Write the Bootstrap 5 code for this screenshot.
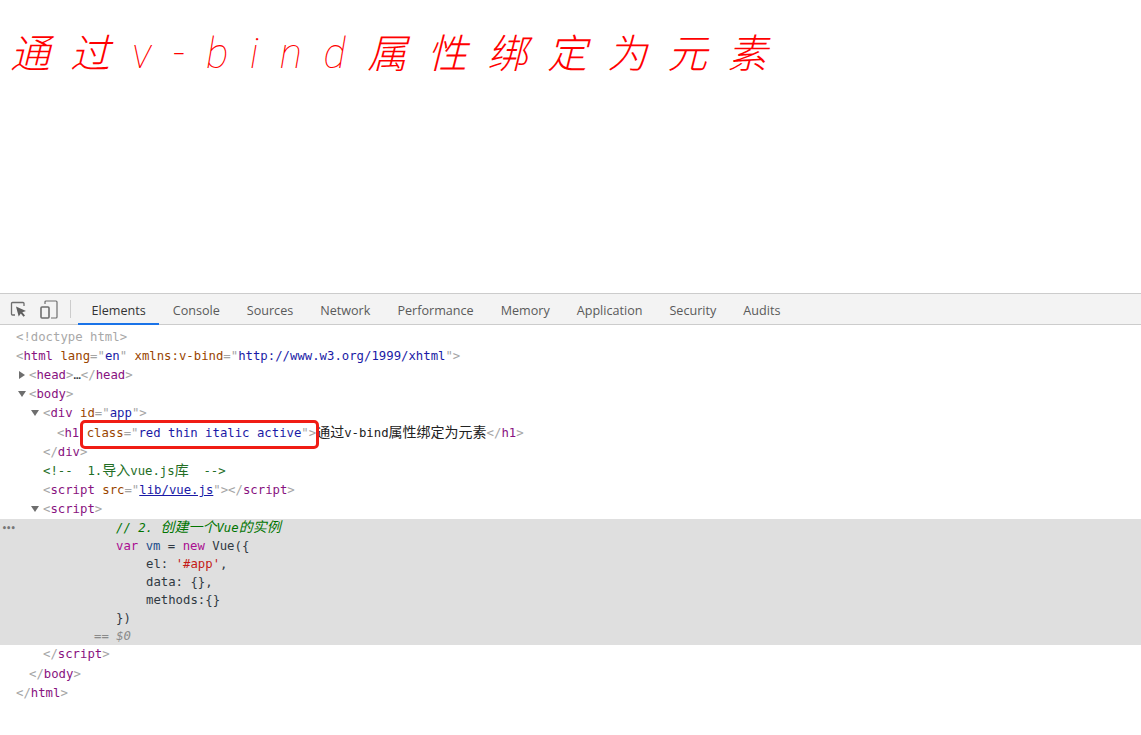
<!doctype html>
<html lang="zh"><head><meta charset="utf-8">
<link href="https://cdn.jsdelivr.net/npm/bootstrap@5.3.0/dist/css/bootstrap.min.css" rel="stylesheet">
<style>
body{background:#fff;overflow:hidden}
.stage{height:293px;padding:25px 0 0 10px}
.stage h1{margin:0;color:#f00;font-family:"Roboto","Noto Sans CJK SC",sans-serif;font-weight:200;font-style:italic;font-size:40px;letter-spacing:20px;line-height:58px;white-space:nowrap}
.stage h1 .lat{letter-spacing:21.4px;font-weight:100;font-size:42px;padding-left:2px}
.dt-bar{height:32px;background:#f3f3f3;border-top:1px solid #ccc;border-bottom:1px solid #ccc;font-family:"Open Sans","Noto Sans",sans-serif;font-size:12.6px;color:#5a5a5a}
.dt-icons{width:70px;padding-left:10px;gap:13px}
.dt-sep{width:1px;height:18px;background:#ccc;margin-right:7px}
.dt-tab{padding:2px 13.5px 0;height:31px;line-height:29px;white-space:nowrap}
.dt-tab.on{color:#333;box-shadow:inset 0 -2px 0 #1a73e8}
.tree{font-family:"DejaVu Sans Mono","Noto Sans CJK SC",monospace;font-size:12.3px;color:#303942;padding-top:3px;position:relative}
.ln{height:19px;line-height:19px;position:relative;white-space:pre}
.gap{margin-top:1px}
.i0{padding-left:16px}.i1{padding-left:29px}.i2{padding-left:43px}.i3{padding-left:57px}
.sel{background:#dfdfdf}
.sel .ln{height:18px;line-height:19px}
.sel .ln:first-child{line-height:17px}
.tail .ln{height:19.5px}
.code{padding-left:116px}.code2{padding-left:146px}
.tg{color:#881280}.br{color:#a5a5a5}.an{color:#994500}.av{color:#1a1aa6}.cm{color:#236e25}.dim{color:#a8a8a8}
.lk{color:#1a1aa6;text-decoration:underline}
.kw{color:#aa0d91}.str{color:#c41a16}.var{color:#1c4d8b}
.ccm{color:#007400;font-style:italic}
.zh{font-size:14px;line-height:1;font-family:"Noto Sans CJK SC",sans-serif}
.tw{position:absolute;width:0;height:0}
.tw.r{border-left:6px solid #6e6e6e;border-top:4px solid transparent;border-bottom:4px solid transparent;top:5px}
.tw.d{border-top:6px solid #6e6e6e;border-left:4px solid transparent;border-right:4px solid transparent;top:6px}
.dots{position:absolute;left:2px;top:1px;color:#777;font-weight:700;font-size:8px;letter-spacing:-.5px}
.hl{position:absolute;left:80px;top:95px;width:239px;height:29px;border:3px solid #f01c14;border-radius:5px}
.txt{color:#222}
.eq{color:#8a8a8a}
</style></head><body>
<div class="stage"><h1>通过<span class="lat">v-bind</span>属性绑定为元素</h1></div>
<div class="dt-bar d-flex align-items-center">
 <div class="dt-icons d-flex align-items-center flex-shrink-0">
  <svg width="17" height="17" viewBox="0 0 17 17" fill="none"><path d="M5 14H2.500A1 1 0 0 1 1.500 13V2.500A1 1 0 0 1 2.500 1.500H13A1 1 0 0 1 14 2.500V5" stroke="#6e6e6e" stroke-width="1.300"/><path d="M6 5.500 16 10 12.300 11.300 15 14.500 13.500 15.800 10.800 12.400 8.700 15.500Z" fill="#5f5f5f"/></svg>
  <svg width="18" height="19" viewBox="0 0 18 19" fill="none"><rect x="1" y="7" width="8" height="11" rx="1" stroke="#6e6e6e" stroke-width="1.600"/><path d="M5 4V2A1 1 0 0 1 6 1H16A1 1 0 0 1 17 2V17A1 1 0 0 1 16 18H11" stroke="#6e6e6e" stroke-width="1.200"/></svg>
 </div>
 <div class="dt-sep flex-shrink-0"></div>
 <div class="dt-tab on">Elements</div><div class="dt-tab">Console</div><div class="dt-tab">Sources</div><div class="dt-tab">Network</div><div class="dt-tab">Performance</div><div class="dt-tab">Memory</div><div class="dt-tab">Application</div><div class="dt-tab">Security</div><div class="dt-tab">Audits</div>
</div>
<div class="tree">
<div class="ln i0 dim">&lt;!doctype html&gt;</div>
<div class="ln i0"><span class="br">&lt;</span><span class="tg">html</span> <span class="an">lang</span><span class="br">="</span><span class="av">en</span><span class="br">"</span> <span class="an">xmlns:v-bind</span><span class="br">="</span><span class="av">http://www.w3.org/1999/xhtml</span><span class="br">"&gt;</span></div>
<div class="ln i1"><i class="tw r" style="left:19px"></i><span class="br">&lt;</span><span class="tg">head</span><span class="br">&gt;</span>…<span class="br">&lt;/</span><span class="tg">head</span><span class="br">&gt;</span></div>
<div class="ln i1"><i class="tw d" style="left:18px"></i><span class="br">&lt;</span><span class="tg">body</span><span class="br">&gt;</span></div>
<div class="ln i2"><i class="tw d" style="left:31px"></i><span class="br">&lt;</span><span class="tg">div</span> <span class="an">id</span><span class="br">="</span><span class="av">app</span><span class="br">"&gt;</span></div>
<div class="ln i3 gap"><span class="br">&lt;</span><span class="tg">h1</span> <span class="an">class</span><span class="br">="</span><span class="av">red thin italic active</span><span class="br">"&gt;</span><span class="txt"><span class="zh">通过</span>v-bind<span class="zh">属性绑定为元素</span></span><span class="br">&lt;/</span><span class="tg">h1</span><span class="br">&gt;</span></div>
<div class="ln i2"><span class="br">&lt;/</span><span class="tg">div</span><span class="br">&gt;</span></div>
<div class="ln i2 cm">&lt;!--  1.<span class="zh">导入</span>vue.js<span class="zh">库</span>  --&gt;</div>
<div class="ln i2"><span class="br">&lt;</span><span class="tg">script</span> <span class="an">src</span><span class="br">="</span><span class="lk">lib/vue.js</span><span class="br">"&gt;&lt;/</span><span class="tg">script</span><span class="br">&gt;</span></div>
<div class="ln i2"><i class="tw d" style="left:31px"></i><span class="br">&lt;</span><span class="tg">script</span><span class="br">&gt;</span></div>
<div class="sel">
<div class="ln code"><span class="dots">•••</span><span class="ccm">// 2. <span class="zh">创建一个</span>Vue<span class="zh">的实例</span></span></div>
<div class="ln code"><span class="kw">var</span> <span class="var">vm</span> = <span class="kw">new</span> Vue({</div>
<div class="ln code2">el: <span class="str">'#app'</span>,</div>
<div class="ln code2">data: {},</div>
<div class="ln code2">methods:{}</div>
<div class="ln code">})</div>
<div class="ln" style="padding-left:94px"><span class="eq">== <i>$0</i></span></div>
</div>
<div class="tail">
<div class="ln i2"><span class="br">&lt;/</span><span class="tg">script</span><span class="br">&gt;</span></div>
<div class="ln i1"><span class="br">&lt;/</span><span class="tg">body</span><span class="br">&gt;</span></div>
<div class="ln i0"><span class="br">&lt;/</span><span class="tg">html</span><span class="br">&gt;</span></div>
</div>
<div class="hl"></div>
</div>
</body></html>
